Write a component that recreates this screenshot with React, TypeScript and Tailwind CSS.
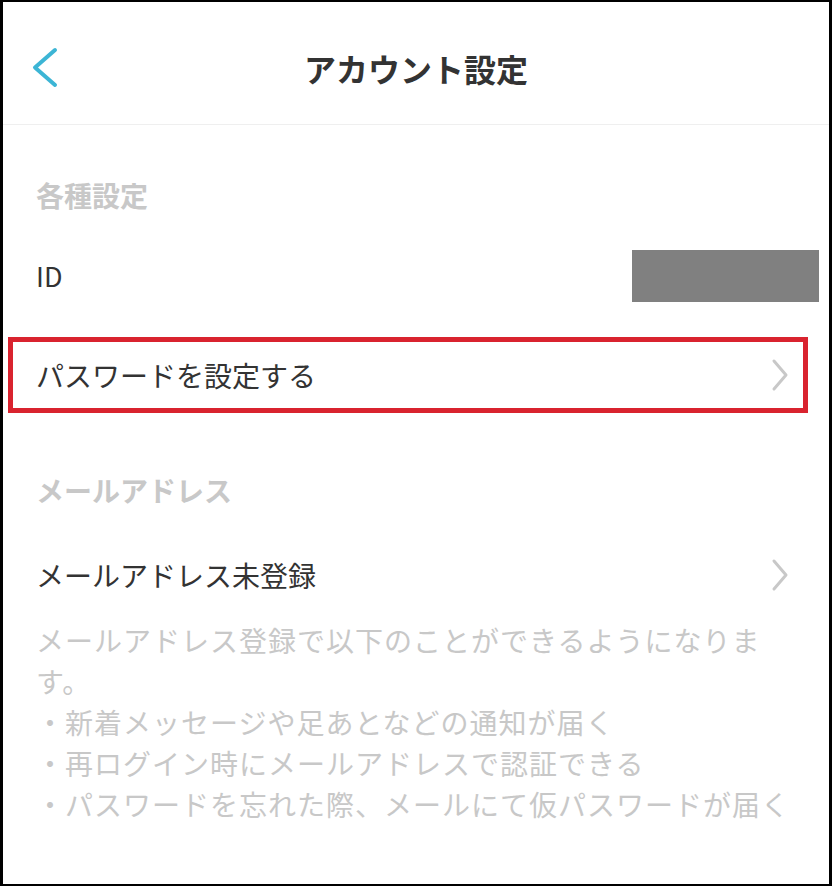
import React from 'react';

const RowChevron = () => (
  <svg width="20" height="34" viewBox="0 0 20 34" fill="none" stroke="#c8c8c8" strokeWidth="3" strokeLinecap="round" strokeLinejoin="round">
    <polyline points="4,3 16,17 4,31" />
  </svg>
);

const notes = [
  '・新着メッセージや足あとなどの通知が届く',
  '・再ログイン時にメールアドレスで認証できる',
  '・パスワードを忘れた際、メールにて仮パスワードが届く',
];

export default function App() {
  return (
    <div className="w-[832px] h-[886px] bg-white border-black border-x-[3px] border-y-2 font-['Noto_Sans_CJK_JP',sans-serif] text-[#333]">
      <header className="h-[123px] pt-[9px] flex items-center border-b border-[#efefef]">
        <div className="w-[120px] pl-[27px] flex">
          <svg width="30" height="44" viewBox="0 0 30 44" fill="none" stroke="#3cb5d5" strokeWidth="4" strokeLinecap="round" strokeLinejoin="round">
            <polyline points="25,4 5,21.5 25,39" />
          </svg>
        </div>
        <h1 className="flex-1 text-center text-[32px] font-bold leading-[40px]">アカウント設定</h1>
        <div className="w-[120px]" />
      </header>

      <p className="mt-[50px] pl-[33px] text-[28px] leading-[40px] font-bold text-[#c8c8c8]">各種設定</p>

      <div className="mt-[35px] h-[52px] flex items-center justify-between pl-[33px] pr-[10px]">
        <span className="text-[27px]">ID</span>
        <div className="w-[187px] h-[52px] bg-[#808080]" />
      </div>

      <div className="mt-[35px] ml-[5px] mr-[21px] h-[76px] border-[5px] border-[#d9232f] flex items-center justify-between pl-[23px] pr-[13px]">
        <span className="text-[28px]">パスワードを設定する</span>
        <RowChevron />
      </div>

      <p className="mt-[57px] pl-[33px] text-[28px] leading-[40px] font-bold text-[#c8c8c8]">メールアドレス</p>

      <div className="mt-[27px] h-[76px] flex items-center justify-between pl-[33px] pr-[39px]">
        <span className="text-[28px]">メールアドレス未登録</span>
        <RowChevron />
      </div>

      <div className="mt-[7px] pl-[33px] pr-[33px] text-[28px] leading-[41px] tracking-[1px] text-[#c8c8c8]">
        <p>メールアドレス登録で以下のことができるようになります。</p>
        {notes.map((n, i) => (
          <p key={i}>{n}</p>
        ))}
      </div>
    </div>
  );
}
